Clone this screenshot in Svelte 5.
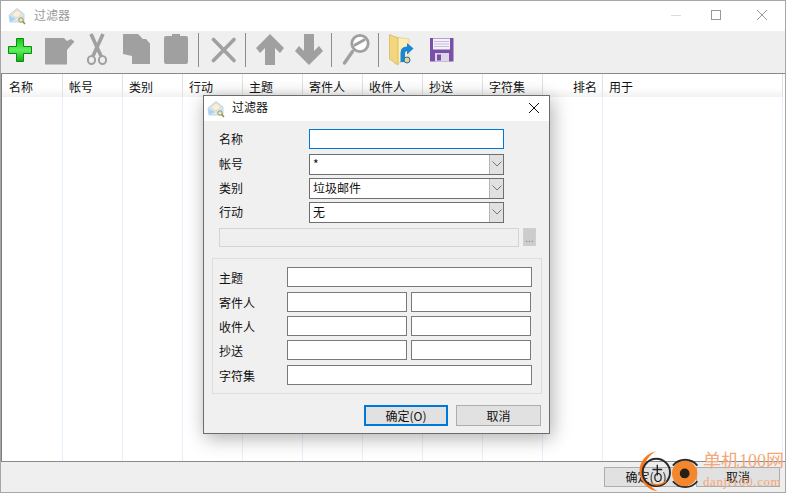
<script lang="ts">
	const columns = [
		{ label: '名称' },
		{ label: '帐号' },
		{ label: '类别' },
		{ label: '行动' },
		{ label: '主题' },
		{ label: '寄件人' },
		{ label: '收件人' },
		{ label: '抄送' },
		{ label: '字符集' },
		{ label: '排名', right: true },
		{ label: '用于', last: true }
	];
	const combos = [
		{ label: '帐号', value: '*' },
		{ label: '类别', value: '垃圾邮件' },
		{ label: '行动', value: '无' }
	];
	const matches = [
		{ label: '主题', split: false, cls: 'first' },
		{ label: '寄件人', split: true, cls: '' },
		{ label: '收件人', split: true, cls: '' },
		{ label: '抄送', split: true, cls: '' },
		{ label: '字符集', split: false, cls: 'end' }
	];
</script>

{#snippet appIcon()}
	<svg class="app-icon" viewBox="0 0 18 18" width="18" height="18">
		<path d="M1 8 L9 1.5 L16 7 V15 H2 Z" fill="#d8ecf9" stroke="#b4cde0" stroke-width="0.8" />
		<path d="M3.5 8 L9 3 L14 7 L9 11 Z" fill="#fcefd9" stroke="#e8c49a" stroke-width="0.6" />
		<path d="M1.5 8.5 L8 12 L2 15 Z" fill="#a6d4f4" />
		<path d="M16 8 L9 12 L15 15 Z" fill="#c0e0f6" />
		<circle cx="13" cy="13" r="2.2" fill="#f2ecb4" stroke="#a39a50" stroke-width="1" />
		<path d="M14.6 14.6 L17 17" stroke="#8a8450" stroke-width="1.4" />
	</svg>
{/snippet}

<div class="window">
	<header class="titlebar">
		{@render appIcon()}
		<span class="title">过滤器</span>
		<div class="controls">
			<svg viewBox="0 0 10 10" width="10" height="10" class="min"><path d="M0 5.5 H10" stroke="#dcdcdc" /></svg>
			<svg viewBox="0 0 10 10" width="10" height="10" class="max"><rect x="0.5" y="0.5" width="9" height="9" fill="none" stroke="#999" /></svg>
			<svg viewBox="0 0 10 10" width="10" height="10" class="close"><path d="M0 0 L10 10 M10 0 L0 10" stroke="#999" /></svg>
		</div>
	</header>

	<div class="toolbar">
		<svg class="t-add" viewBox="8 32 25 36" width="25" height="36">
			<defs>
				<linearGradient id="plusfill" x1="0" y1="0" x2="0" y2="1">
					<stop offset="0" stop-color="#16c416" />
					<stop offset="0.5" stop-color="#5ef05e" />
					<stop offset="1" stop-color="#12b012" />
				</linearGradient>
			</defs>
			<path d="M16.5 38.5 H23.5 V46.5 H31.5 V53.5 H23.5 V61.5 H16.5 V53.5 H8.5 V46.5 H16.5 Z" fill="url(#plusfill)" stroke="#0c8c0c" />
		</svg>
		<svg class="t-note" viewBox="45 32 30 36" width="30" height="36">
			<path d="M45 38 H64 L67 41 L71 39 L74.5 41.5 L67 50 V64.5 H45 Z" fill="#a0a0a0" />
		</svg>
		<svg class="t-cut" viewBox="86 32 22 36" width="22" height="36">
			<path d="M91 34 L101 56 M103 34 L93 56" stroke="#a0a0a0" stroke-width="3.6" fill="none" />
			<ellipse cx="91.5" cy="60" rx="3.6" ry="4" fill="none" stroke="#a0a0a0" stroke-width="2" />
			<ellipse cx="102.5" cy="60" rx="3.6" ry="4" fill="none" stroke="#a0a0a0" stroke-width="2" />
		</svg>
		<svg class="t-copy" viewBox="122 32 29 36" width="29" height="36">
			<path d="M123 34 H138 L143 39 H146 L150 43.5 V64 H132 V56 L123 54 Z" fill="#a0a0a0" />
		</svg>
		<svg class="t-paste" viewBox="164 32 25 36" width="25" height="36">
			<path d="M166 36 H172 V34 H180 V36 H186 Q188 36 188 38 V62 Q188 64 186 64 H166 Q164 64 164 62 V38 Q164 36 166 36 Z" fill="#a0a0a0" />
		</svg>
		<span class="sep s1"></span>
		<svg class="t-del" viewBox="211 32 26 36" width="26" height="36">
			<path d="M213.5 39.5 L234 60.5 M234 39.5 L213.5 60.5" stroke="#a0a0a0" stroke-width="3.6" stroke-linecap="round" />
		</svg>
		<span class="sep s2"></span>
		<svg class="t-up" viewBox="255 32 30 36" width="30" height="36">
			<path d="M270 34 L284 48 L280 53 L275 48 V65 H265 V48 L260 53 L256 48 Z" fill="#a0a0a0" />
		</svg>
		<svg class="t-down" viewBox="294 32 30 36" width="30" height="36">
			<path d="M304 34 H314 V51 L319 46 L323 51 L309 65 L295 51 L299 46 L304 51 Z" fill="#a0a0a0" />
		</svg>
		<span class="sep s3"></span>
		<svg class="t-find" viewBox="342 32 30 36" width="30" height="36">
			<circle cx="360" cy="43.5" r="8.2" fill="#fff" stroke="#a0a0a0" stroke-width="2.8" />
			<path d="M355 45 L364 40" stroke="#a0a0a0" stroke-width="3" stroke-linecap="round" />
			<path d="M352.5 51.5 L344.5 63" stroke="#a0a0a0" stroke-width="3.4" stroke-linecap="round" />
		</svg>
		<span class="sep s4"></span>
		<svg class="t-folder" viewBox="388 32 26 36" width="26" height="36">
			<path d="M395 37 L409 39 V60 L395 64 Z" fill="#fbeeb8" stroke="#d9c27a" stroke-width="0.6" />
			<path d="M389.5 34.5 L398 38 V65 L389.5 59 Z" fill="#f3d67e" stroke="#cfa94a" stroke-width="0.6" />
			<path d="M400.5 62 V53 Q400.5 46.5 407 46.5 V43 L413.5 48.5 L407 54.5 V51 Q405 51 405 54 V62 Z" fill="#1a86d8" />
			<circle cx="407" cy="60" r="3" fill="#e8d48a" stroke="#1a6fb4" />
		</svg>
		<svg class="t-save" viewBox="430 32 24 36" width="24" height="36">
			<rect x="430" y="38" width="23.5" height="23.5" fill="#7a4fa6" />
			<rect x="433" y="38.5" width="17" height="11" fill="#f4f2f8" />
			<path d="M434 41.5 H449 M434 44 H449 M434 46.5 H449" stroke="#c9bddb" />
			<rect x="435" y="53" width="14" height="8.5" fill="#ddd6e8" />
			<rect x="437" y="54.5" width="4" height="6" fill="#7a4fa6" />
		</svg>
	</div>

	<div class="list">
		{#each columns as col}
			<div class="col" class:last={col.last}>
				<div class="head" class:right={col.right}>{col.label}</div>
				<div class="rest"></div>
			</div>
		{/each}
	</div>

	<footer class="status">
		<button class="btn">确定(O)</button>
		<button class="btn">取消</button>
	</footer>

	<div class="dialog">
		<div class="dialog-title">
			{@render appIcon()}
			<span>过滤器</span>
			<svg class="dialog-close" viewBox="0 0 10 10" width="10" height="10"><path d="M0 0 L10 10 M10 0 L0 10" stroke="#111" /></svg>
		</div>
		<div class="dialog-body">
			<div class="top-form">
				<div class="row name-row">
					<label for="name">名称</label>
					<input id="name" class="name" type="text" />
				</div>
				{#each combos as combo}
					<div class="row">
						<span class="label">{combo.label}</span>
						<div class="combo">
							<span class="combo-value">{combo.value}</span>
							<span class="combo-arrow">
								<svg viewBox="0 0 10 6" width="10" height="6"><path d="M0.5 0.5 L5 5 L9.5 0.5" fill="none" stroke="#777" /></svg>
							</span>
						</div>
					</div>
				{/each}
				<div class="disabled-row">
					<div class="disabled-field"></div>
					<div class="more">...</div>
				</div>
			</div>

			<div class="group">
				{#each matches as m}
					<div class="match {m.cls}">
						<span class="match-label">{m.label}</span>
						{#if m.split}
							<span class="field half"></span>
							<span class="field half second"></span>
						{:else}
							<span class="field wide"></span>
						{/if}
					</div>
				{/each}
			</div>

			<div class="actions">
				<button class="btn default">确定(O)</button>
				<button class="btn cancel">取消</button>
			</div>
		</div>
	</div>

	<div class="watermark">
		<svg viewBox="636 450 66 43" width="66" height="42">
			<path d="M655 451 C641 455 636 466 638.5 476 C641 486 648 491 656 492 C648 487 642 481 642 472 C642 462 648 455 655 451 Z" fill="#f47a1c" />
			<circle cx="655" cy="473" r="14" fill="none" stroke="#2a2a2a" stroke-width="2" />
			<path d="M651 470 H661 M656 465 V476" stroke="#222" stroke-width="1.4" />
			<path d="M649 484 A14 14 0 0 0 665 482" fill="none" stroke="#f47a1c" stroke-width="1.5" />
			<circle cx="684" cy="474" r="13" fill="#f4872c" />
			<path d="M672 466 A16 16 0 0 1 697 466 M697 482 A16 16 0 0 1 672 482" fill="none" stroke="#2a2a2a" stroke-width="2" />
			<circle cx="684" cy="474" r="5" fill="#262019" />
		</svg>
		<div class="mark-text">
			<span class="mark-cn">单机100网</span>
			<span class="mark-en">danji100.com</span>
		</div>
	</div>
</div>

<style>
	:global(body) {
		margin: 0;
	}

	.window {
		position: relative;
		width: 786px;
		height: 493px;
		box-sizing: border-box;
		border: 1px solid #a6a6a6;
		background: #efefef;
		display: flex;
		flex-direction: column;
		overflow: hidden;
		font-family: 'Noto Sans CJK SC', 'Liberation Sans', sans-serif;
		font-size: 12px;
		color: #111;
	}

	.titlebar {
		height: 30px;
		flex: none;
		background: #fff;
		display: flex;
		align-items: center;
		padding-left: 7px;
	}

	.app-icon {
		flex: none;
		display: block;
	}

	.title {
		margin-left: 8px;
		margin-bottom: 2px;
		color: #999;
		line-height: 16px;
	}

	.controls {
		margin-left: auto;
		margin-bottom: 2px;
		display: flex;
		align-items: center;
	}

	.min {
		margin-right: 30px;
	}

	.max {
		margin-right: 36px;
	}

	.close {
		margin-right: 18px;
	}

	.toolbar {
		height: 42px;
		flex: none;
		background: #efefef;
		display: flex;
		align-items: flex-start;
		padding-top: 1px;
		padding-left: 7px;
		box-sizing: border-box;
	}

	.toolbar svg {
		flex: none;
		display: block;
	}

	.t-note { margin-left: 12px; }
	.t-cut { margin-left: 11px; }
	.t-copy { margin-left: 14px; }
	.t-paste { margin-left: 13px; }
	.t-del { margin-left: 12px; }
	.t-up { margin-left: 9px; }
	.t-down { margin-left: 9px; }
	.t-find { margin-left: 10px; }
	.t-folder { margin-left: 9px; }
	.t-save { margin-left: 16px; }

	.sep {
		flex: none;
		width: 1px;
		height: 34px;
		margin-top: 1px;
		background: #8c8c8c;
	}

	.s1 { margin-left: 9px; }
	.s2 { margin-left: 8px; }
	.s3 { margin-left: 7px; }
	.s4 { margin-left: 6px; }

	.list {
		flex: 1;
		min-height: 0;
		display: flex;
		background: #fff;
		border-top: 1px solid #8a8a8a;
		border-bottom: 1px solid #8a8a8a;
		border-left: 1px solid #7c7c7c;
	}

	.col {
		width: 60px;
		flex: none;
		display: flex;
		flex-direction: column;
	}

	.col:first-child {
		width: 61px;
	}

	.col:first-child .head {
		padding-left: 7px;
	}

	.col.last {
		width: 180px;
	}

	.head {
		height: 23px;
		flex: none;
		box-sizing: border-box;
		padding: 4px 5px 0 6px;
		line-height: 18px;
		border-right: 1px solid #e2e2e2;
		background: linear-gradient(#fff 0 60%, #f2f2f2 100%);
	}

	.head.right {
		text-align: right;
	}

	.rest {
		flex: 1;
		border-right: 1px solid #e6f0fb;
	}

	.status {
		height: 30px;
		flex: none;
		box-sizing: border-box;
		padding: 5px 5px 0 0;
		display: flex;
		justify-content: flex-end;
		gap: 8px;
	}

	.btn {
		width: 84px;
		height: 20px;
		padding: 0;
		box-sizing: border-box;
		border: 1px solid #adadad;
		background: #e1e1e1;
		font: inherit;
		color: #111;
		line-height: 16px;
	}

	.dialog {
		position: absolute;
		left: 202px;
		top: 94px;
		width: 347px;
		height: 339px;
		box-sizing: border-box;
		border: 1px solid #6c6c6c;
		background: #f0f0f0;
		box-shadow: 2px 4px 18px rgba(0, 0, 0, 0.32);
		display: flex;
		flex-direction: column;
	}

	.dialog-title {
		height: 25px;
		flex: none;
		background: #fff;
		display: flex;
		align-items: center;
		padding-left: 3px;
	}

	.dialog-title span {
		margin-left: 7px;
		margin-bottom: 3px;
		line-height: 16px;
	}

	.dialog-close {
		margin-left: auto;
		margin-right: 10px;
		margin-bottom: 2px;
	}

	.dialog-body {
		flex: 1;
		padding-top: 8px;
	}

	.top-form {
		padding-left: 15px;
		display: flex;
		flex-direction: column;
		gap: 4px;
	}

	.row {
		display: flex;
		align-items: center;
		height: 20px;
	}

	.name-row {
		margin-bottom: 1px;
	}

	.row label,
	.label {
		width: 90px;
		flex: none;
		line-height: 16px;
	}

	.name {
		width: 195px;
		height: 20px;
		padding: 0 3px;
		box-sizing: border-box;
		border: 1px solid #0078d7;
		background: #fff;
		outline: none;
		font: inherit;
	}

	.combo {
		width: 195px;
		height: 21px;
		box-sizing: border-box;
		border: 1px solid #6e6e6e;
		background: #fff;
		display: flex;
	}

	.combo-value {
		flex: 1;
		padding-left: 3px;
		line-height: 18px;
	}

	.combo-arrow {
		width: 14px;
		flex: none;
		box-sizing: border-box;
		background: #e1e1e1;
		border-left: 1px solid #b4b4b4;
		display: flex;
		align-items: center;
		justify-content: center;
	}

	.disabled-row {
		display: flex;
		gap: 4px;
		margin-top: 2px;
	}

	.disabled-field {
		width: 300px;
		height: 19px;
		box-sizing: border-box;
		border: 1px solid #d4d4d4;
		background: #efefef;
	}

	.more {
		width: 13px;
		height: 18px;
		box-sizing: border-box;
		border: 1px solid #cfcfcf;
		background: #cccccc;
		color: #8a8a8a;
		text-align: center;
		line-height: 17px;
		font-size: 10px;
	}

	.group {
		width: 330px;
		height: 136px;
		margin: 11px 0 0 8px;
		box-sizing: border-box;
		border: 1px solid #dedede;
		padding: 8px 0 0 6px;
	}

	.match {
		display: flex;
		align-items: center;
		height: 20px;
		margin-top: 4px;
	}

	.match.first {
		margin-top: 0;
		margin-bottom: 5px;
	}

	.match.end {
		margin-top: 5px;
	}

	.match-label {
		width: 68px;
		flex: none;
		padding-top: 2px;
		line-height: 16px;
	}

	.field {
		height: 20px;
		box-sizing: border-box;
		border: 1px solid #7a7a7a;
		background: #fff;
		flex: none;
	}

	.wide {
		width: 245px;
	}

	.half {
		width: 120px;
	}

	.half.second {
		margin-left: 4px;
	}

	.actions {
		display: flex;
		justify-content: flex-end;
		gap: 8px;
		margin-top: 11px;
		padding-right: 8px;
	}

	.actions .btn {
		height: 21px;
	}

	.btn.default {
		border: 2px solid #0078d7;
	}

	.btn.cancel {
		width: 85px;
	}

	.watermark {
		position: absolute;
		right: 0;
		bottom: 0;
		display: flex;
		align-items: flex-end;
		pointer-events: none;
	}

	.watermark svg {
		display: block;
	}

	.mark-text {
		width: 82px;
		display: flex;
		flex-direction: column;
		color: #f4a878;
		font-family: 'Liberation Serif', 'Noto Sans CJK SC', serif;
	}

	.mark-cn {
		font-size: 18px;
		line-height: 18px;
		margin-bottom: 5px;
		white-space: nowrap;
	}

	.mark-en {
		font-size: 13px;
		line-height: 14px;
		margin-bottom: 3px;
		letter-spacing: 0.6px;
		white-space: nowrap;
	}
</style>
